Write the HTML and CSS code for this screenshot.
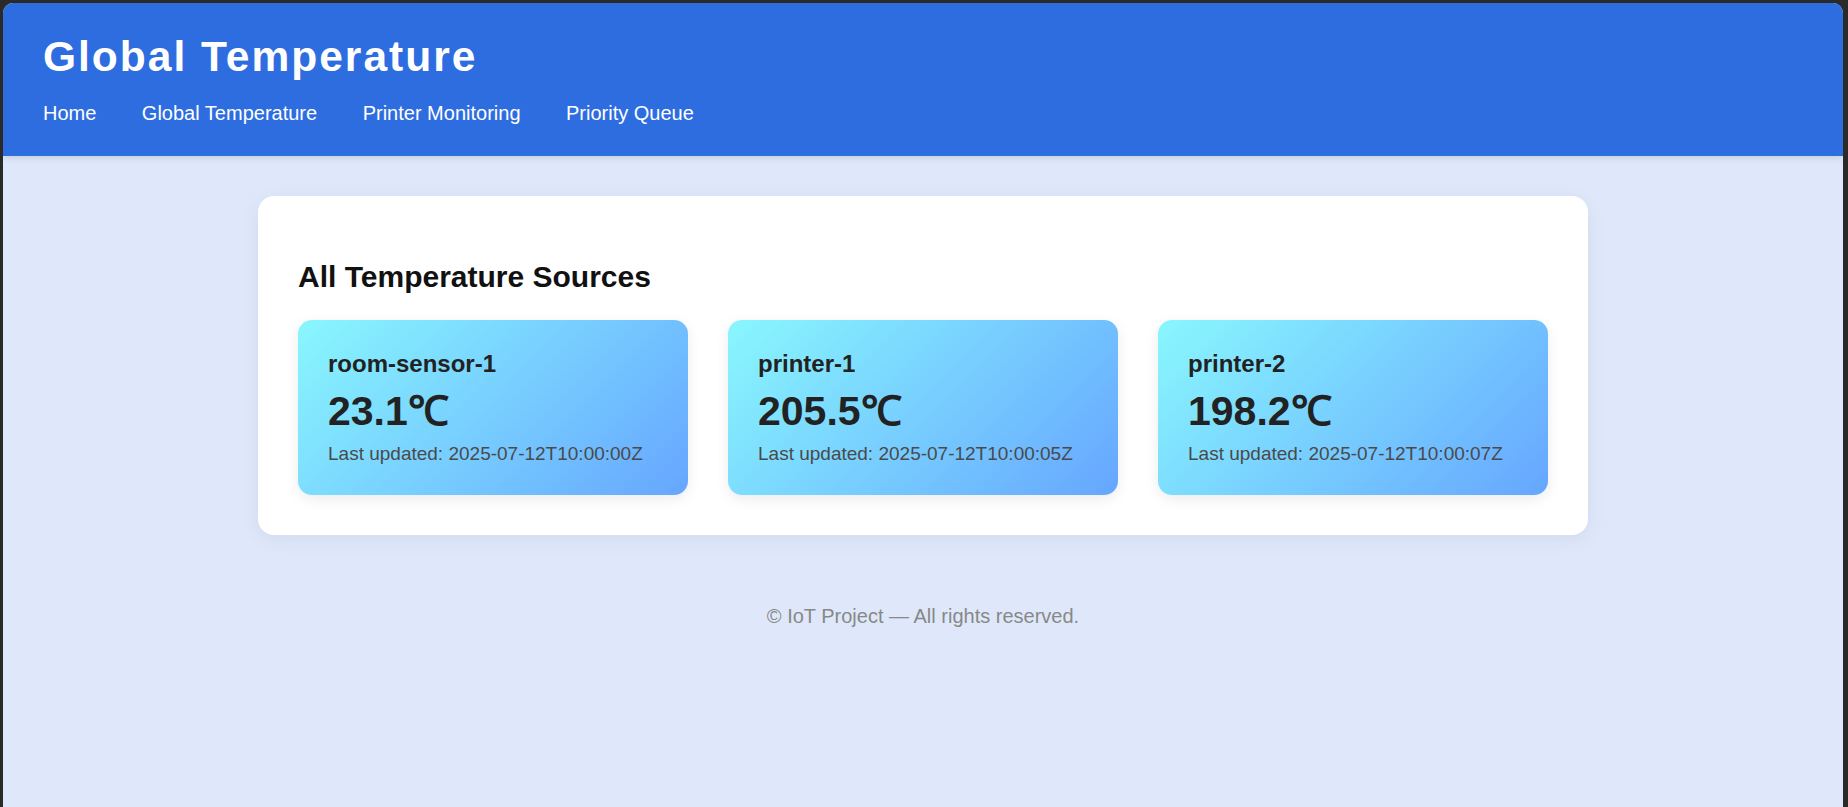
FILE: index.html
```html
<!DOCTYPE html>
<html lang="en">
<head>
<meta charset="utf-8">
<title>Global Temperature</title>
<link rel="stylesheet" href="styles.css">
</head>
<body>
<div class="app">
  <header class="site-header">
    <h1 class="site-title">Global Temperature</h1>
    <nav class="site-nav">
      <a href="#">Home</a>
      <a href="#">Global Temperature</a>
      <a href="#">Printer Monitoring</a>
      <a href="#">Priority Queue</a>
    </nav>
  </header>
  <main class="main">
    <section class="panel">
      <h2 class="panel-title">All Temperature Sources</h2>
      <div class="card-grid">
        <div class="card">
          <div class="card-name">room-sensor-1</div>
          <div class="card-temp">23.1℃</div>
          <div class="card-time">Last updated: 2025-07-12T10:00:00Z</div>
        </div>
        <div class="card">
          <div class="card-name">printer-1</div>
          <div class="card-temp">205.5℃</div>
          <div class="card-time">Last updated: 2025-07-12T10:00:05Z</div>
        </div>
        <div class="card">
          <div class="card-name">printer-2</div>
          <div class="card-temp">198.2℃</div>
          <div class="card-time">Last updated: 2025-07-12T10:00:07Z</div>
        </div>
      </div>
    </section>
  </main>
  <footer class="site-footer">© IoT Project — All rights reserved.</footer>
</div>
</body>
</html>
```
FILE: styles.css
```css
html, body {
  margin: 0;
  padding: 0;
}
body {
  background: #2a2a2a;
  padding: 3px 5px 0 3px;
  font-family: "Liberation Sans", Arial, sans-serif;
}
.app {
  background: #dfe8fa;
  border-radius: 10px 10px 0 0;
  overflow: hidden;
  min-height: calc(100vh - 3px);
}
.site-header {
  background: #2e6ddf;
  color: #fff;
  padding: 30px 40px 32px;
  box-shadow: 0 2px 6px rgba(0, 0, 0, 0.12);
  position: relative;
}
.site-title {
  margin: 0 0 21px;
  font-size: 42.5px;
  line-height: 48px;
  font-weight: bold;
  letter-spacing: 2px;
}
.site-nav {
  display: flex;
  gap: 45.5px;
}
.site-nav a {
  color: #fff;
  text-decoration: none;
  font-size: 20px;
  line-height: 22px;
}
.main {
  padding: 40px 0;
}
.panel {
  box-sizing: border-box;
  max-width: 1330px;
  margin: 0 auto;
  padding: 40px;
  background: #fff;
  border-radius: 16px;
  box-shadow: 0 4px 20px rgba(0, 0, 0, 0.06);
}
.panel-title {
  margin: 24px 0 26px;
  font-size: 30px;
  line-height: 34px;
  font-weight: bold;
  color: #111;
}
.card-grid {
  display: grid;
  grid-template-columns: repeat(3, 1fr);
  gap: 40px;
}
.card {
  padding: 30px;
  border-radius: 14px;
  background: linear-gradient(135deg, #89f7fe 0%, #66a6ff 100%);
  box-shadow: 0 4px 14px rgba(0, 0, 0, 0.08);
  color: #222;
}
.card-name {
  font-size: 24px;
  line-height: 28px;
  font-weight: bold;
  margin: 0 0 10px;
}
.card-temp {
  font-size: 41px;
  line-height: 46px;
  font-weight: bold;
  margin: 0 0 9px;
}
.card-time {
  font-size: 19px;
  line-height: 22px;
  color: #4a4a4a;
}
.site-footer {
  padding: 30px 0;
  text-align: center;
  font-size: 20px;
  line-height: 22px;
  color: #888;
}
```
